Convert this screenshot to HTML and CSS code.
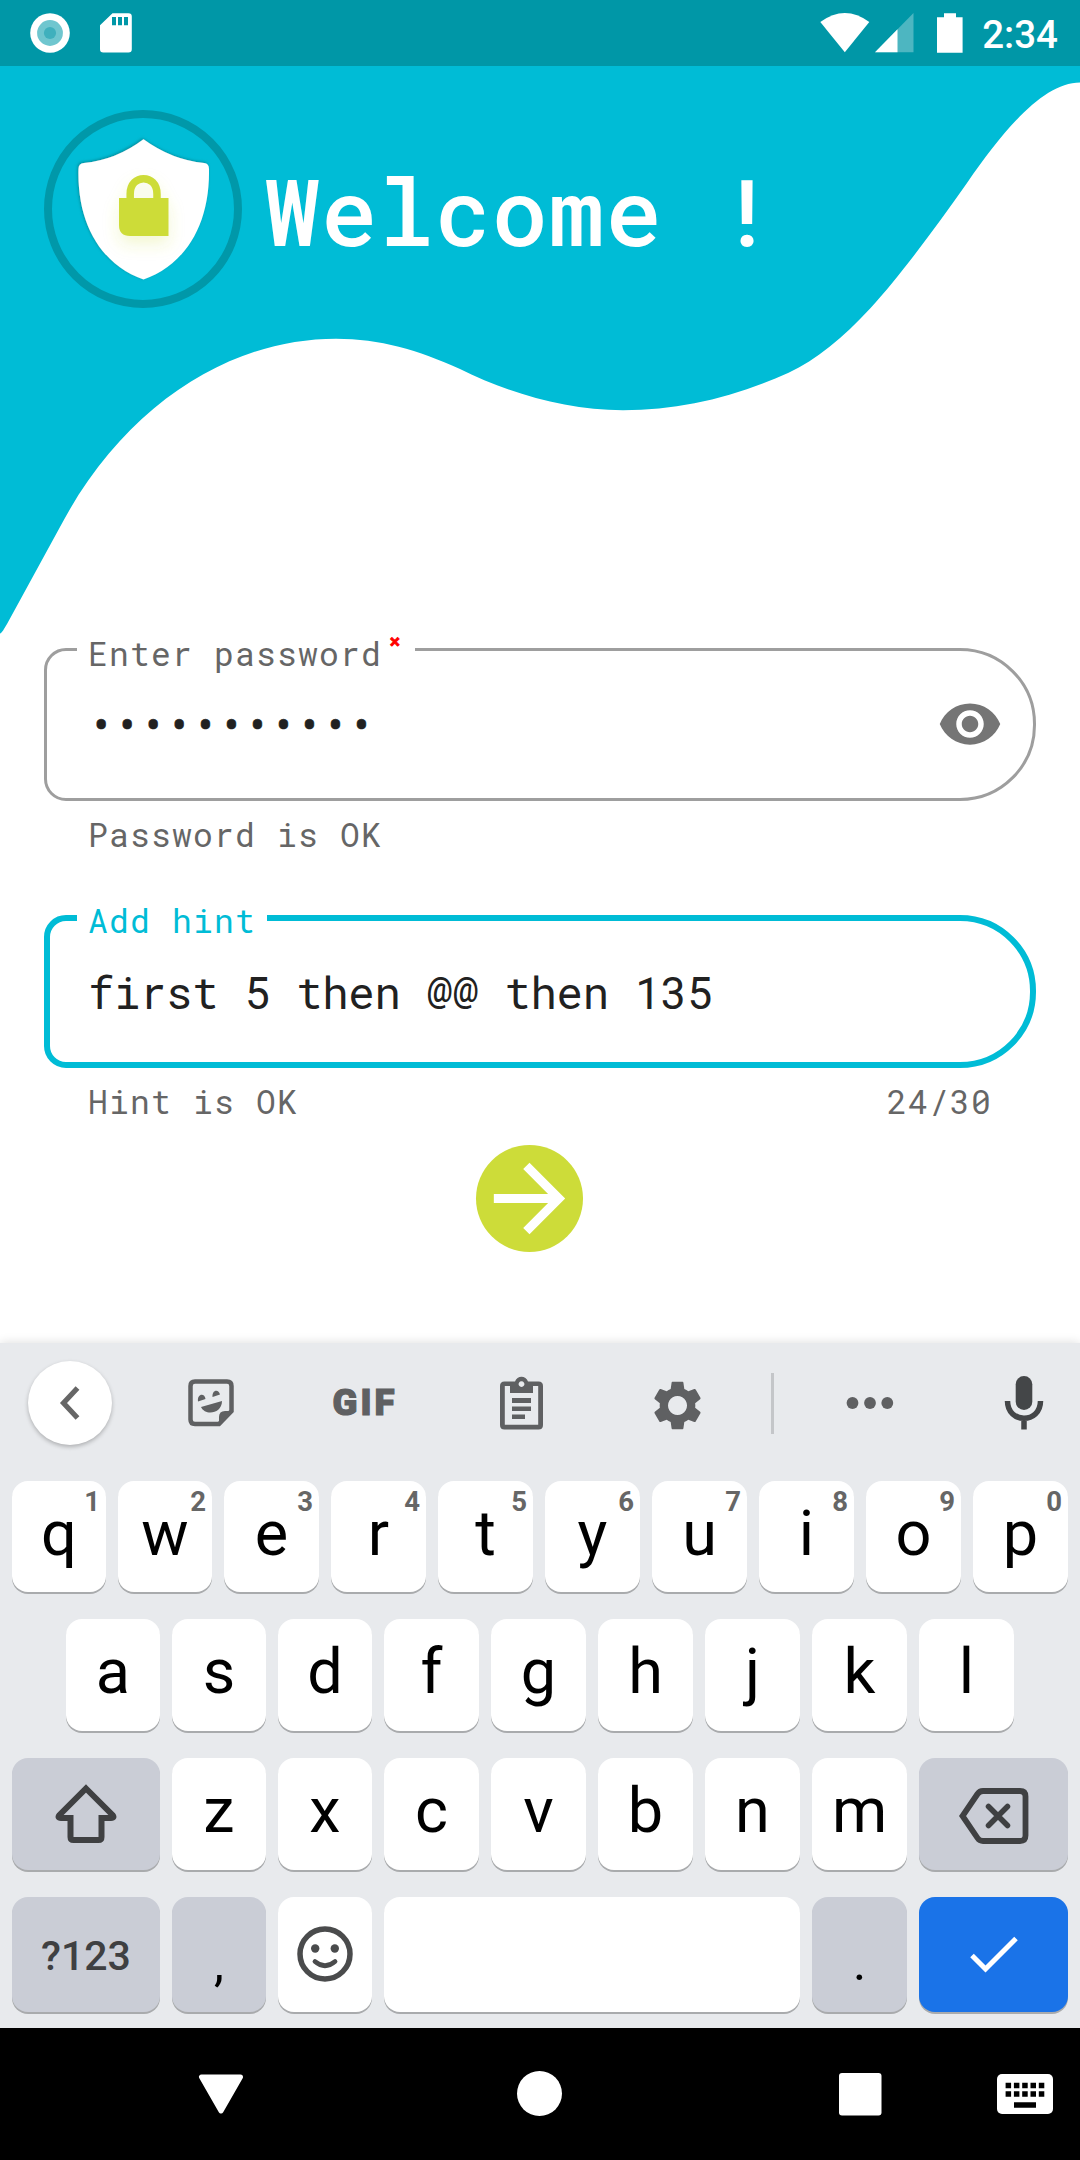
FILE: index.html
```html
<!DOCTYPE html>
<html lang="en">
<head>
<meta charset="utf-8">
<title>Welcome</title>
<link rel="stylesheet" href="styles.css">
</head>
<body>
<div class="screen">
  <div class="status-bar">
    <div class="status-left">
      <svg width="40" height="40" viewBox="0 0 40 40"><circle cx="20" cy="20" r="19.8" fill="#fff"/><circle cx="20" cy="20" r="12.9" fill="#6fc6cf"/><circle cx="20" cy="20" r="6.1" fill="#3fb0bd"/></svg>
      <svg width="32" height="40" viewBox="0 0 32 40"><path d="M12.500.3H28.500a3.300 3.300 0 0 1 3.300 3.300V36.200a3.300 3.300 0 0 1-3.300 3.300H3.300A3.300 3.300 0 0 1 0 36.200V12.200z" fill="#fff"/><path d="M12 4h4v8.300h-4zM18 4h4v8.300h-4zM24 4h4v8.300h-4z" fill="#0097a7"/></svg>
    </div>
    <div class="status-right">
      <svg class="wifi" width="50" height="40" viewBox="0 0 50 40"><path d="M.3 9Q25-9 49.300 9L24.800 39.300z" fill="#fff"/></svg>
      <svg class="signal" width="39" height="40" viewBox="0 0 39 40"><path d="M0 39.300 38.500 0v39.300z" fill="#fff" opacity=".3"/><path d="M0 39.300 22.500 16.300v23z" fill="#fff"/></svg>
      <svg class="battery" width="26" height="40" viewBox="0 0 26 40"><path d="M7 .3h12V4.300h6.600v35.400H0V4.300h7z" fill="#fff"/></svg>
      <span class="clock">2:34</span>
    </div>
  </div>

  <header class="hero">
    <svg class="wave" width="1080" height="570" viewBox="0 66 1080 570"><path fill="#00bcd6" d="M0 66H1080V82.500C1044 82.500 1005 128 967 183C936 227 900 276 870.600 308C843 338 816 360 788.600 372.700C735 397 680 410.300 623 410.300C566 410.300 508 393 460 369C418 350 380 338.700 336 338.700C231 338.700 125 404 60 527L7 624C4 629 2 633 0 633.500z"/></svg>
    <div class="brand">
      <div class="logo">
        <svg width="198" height="198" viewBox="44 110 198 198">
          <defs>
            <filter id="edge" x="-10%" y="-10%" width="120%" height="120%"><feDropShadow dx="-1" dy="-1" stdDeviation="1.500" flood-color="#00838f" flood-opacity=".8"/></filter>
            <filter id="glow" x="-50%" y="-50%" width="200%" height="200%"><feDropShadow dx="0" dy="8" stdDeviation="8" flood-color="#cddc39" flood-opacity=".22"/></filter>
          </defs>
          <circle cx="143" cy="209" r="95" fill="none" stroke="#0098a9" stroke-width="8"/>
          <path filter="url(#edge)" fill="#fff" d="M143.500 139.300Q172 160 204 163Q209 163.500 209 169C210 225 185 265 143.500 279.500C102 265 77 225 78.500 169Q78.500 163.500 84 163Q116 160 143.500 139.300z"/>
          <g filter="url(#glow)"><path fill="#cddc39" d="M119 198H168.500V236H130Q119 236 119 225z"/><path fill="none" stroke="#cddc39" stroke-width="7.500" d="M130.200 200V194C130.200 173.500 157 173.500 157 194V200"/></g>
        </svg>
      </div>
      <h1 class="title">Welcome !</h1>
    </div>
  </header>

  <main class="form">
    <div class="field">
      <div class="outline">
        <label class="label label-wide">Enter password<span class="required">×</span></label>
        <div class="value dots">•••••••••••</div>
        <svg class="eye" width="66" height="66" viewBox="0 0 24 24"><path fill="#757575" d="M12 4.500C7 4.500 2.730 7.610 1 12c1.730 4.390 6 7.500 11 7.500s9.270-3.110 11-7.500c-1.730-4.390-6-7.500-11-7.500zM12 17c-2.760 0-5-2.240-5-5s2.240-5 5-5 5 2.240 5 5-2.240 5-5 5zm0-8c-1.660 0-3 1.340-3 3s1.340 3 3 3 3-1.340 3-3-1.340-3-3-3z"/></svg>
      </div>
      <div class="helper"><span>Password is OK</span></div>
    </div>
    <div class="field focused">
      <div class="outline">
        <label class="label">Add hint</label>
        <div class="value">first 5 then @@ then 135</div>
      </div>
      <div class="helper"><span>Hint is OK</span><span class="counter">24/30</span></div>
    </div>
    <div class="next">
      <svg width="107" height="107" viewBox="0 0 24 24"><path fill="#fff" d="M12 4l-1.410 1.410L16.170 11H4v2h12.170l-5.580 5.590L12 20l8-8z"/></svg>
    </div>
  </main>

  <section class="keyboard">
    <div class="toolbar">
      <div class="tool"><div class="back"><svg width="22" height="34" viewBox="0 0 22 34"><path d="M18.500 2 4.500 17l14 15" fill="none" stroke="#666" stroke-width="5.200"/></svg></div></div>
      <div class="tool"><svg width="46" height="48" viewBox="0 0 46 48"><path d="M7 2.500H39Q43.500 2.500 43.500 7V32L31 45H7Q2.500 45 2.500 40.500V7Q2.500 2.500 7 2.500z" fill="none" stroke="#5f6062" stroke-width="4.500"/><path d="M31 46V38Q31 32 37 32H45z" fill="#5f6062"/><path d="M13 28 34 22C34 35 17 37 13 28zM10 22.500C9 14 17 14 17.500 20zM24.500 18C24 10 31 10 32 15.500z" fill="#5f6062"/></svg></div>
      <div class="tool gif">GIF</div>
      <div class="tool"><svg width="43" height="54" viewBox="0 0 43 54"><path fill="#5f6062" fill-rule="evenodd" d="M15 5.500C17-1 26-1 28 5.500H38.500Q43 5.500 43 10V49Q43 53.500 38.500 53.500H4.500Q0 53.500 0 49V10Q0 5.500 4.500 5.500zM10 10H4.800V48.800H38.200V10H33V17H10zM21.500 5.200a2.900 2.900 0 1 0 .01 0zM12 22H31V27H12zM12 30.500H31V35H12zM12 38.500H25V43H12z"/></svg></div>
      <div class="tool gear"><svg width="57" height="57" viewBox="0 0 24 24"><path fill="#5f6062" fill-rule="evenodd" d="M19.430 12.980c.04-.32.07-.64.07-.98s-.03-.66-.07-.98l2.110-1.650c.19-.15.24-.42.12-.64l-2-3.460c-.12-.22-.39-.3-.61-.22l-2.490 1c-.52-.4-1.080-.73-1.690-.98l-.38-2.650C14.460 2.180 14.250 2 14 2h-4c-.25 0-.46.18-.49.42l-.38 2.650c-.61.25-1.170.59-1.690.98l-2.490-1c-.23-.09-.49 0-.61.22l-2 3.460c-.13.22-.07.49.12.64l2.110 1.650c-.04.32-.07.65-.07.98s.03.66.07.98l-2.110 1.650c-.19.15-.24.42-.12.64l2 3.460c.12.22.39.3.61.22l2.490-1c.52.4 1.080.73 1.690.98l.38 2.650c.03.24.24.42.49.42h4c.25 0 .46-.18.49-.42l.38-2.650c.61-.25 1.170-.59 1.690-.98l2.490 1c.23.09.49 0 .61-.22l2-3.460c.12-.22.07-.49-.12-.64zM12 8a4 4 0 1 0 .01 0z"/></svg></div>
      <div class="tool"><span class="divider"></span></div>
      <div class="tool"><svg width="48" height="12" viewBox="0 0 48 12"><g fill="#5f6062"><circle cx="6.500" cy="6" r="5.900"/><circle cx="24" cy="6" r="5.900"/><circle cx="41.300" cy="6" r="5.900"/></g></svg></div>
      <div class="tool"><svg width="40" height="54" viewBox="0 0 40 54"><rect x="11.700" y="0" width="16.600" height="34" rx="8.300" fill="#444648"/><path d="M3.500 25C3.500 48 36.500 48 36.500 25M20 42V53.500" fill="none" stroke="#444648" stroke-width="5.500"/></svg></div>
    </div>

    <div class="row row-1">
      <div class="key">q<sup>1</sup></div><div class="key">w<sup>2</sup></div><div class="key">e<sup>3</sup></div><div class="key">r<sup>4</sup></div><div class="key">t<sup>5</sup></div><div class="key">y<sup>6</sup></div><div class="key">u<sup>7</sup></div><div class="key">i<sup>8</sup></div><div class="key">o<sup>9</sup></div><div class="key">p<sup>0</sup></div>
    </div>
    <div class="row row-2">
      <div class="key">a</div><div class="key">s</div><div class="key">d</div><div class="key">f</div><div class="key">g</div><div class="key">h</div><div class="key">j</div><div class="key">k</div><div class="key">l</div>
    </div>
    <div class="row row-3">
      <div class="key gray icon"><svg width="64" height="62" viewBox="0 0 64 62"><path d="M32 5.500 58.500 32Q61 35 57 35H47.500V54Q47.500 57 44.500 57H19.500Q16.500 57 16.500 54V35H7Q3 35 5.500 32z" fill="none" stroke="#3f4042" stroke-width="6"/></svg></div>
      <div class="key">z</div><div class="key">x</div><div class="key">c</div><div class="key">v</div><div class="key">b</div><div class="key">n</div><div class="key">m</div>
      <div class="key gray icon del"><svg width="70" height="56" viewBox="0 0 70 56"><path d="M24 3H61Q66.500 3 66.500 8.500V47.500Q66.500 53 61 53H24Q20.500 53 18.500 50L3.500 28 18.500 6Q20.500 3 24 3z" fill="none" stroke="#3f4042" stroke-width="5.800"/><path d="M29.500 18.500 48.500 37.500M48.500 18.500 29.500 37.500" stroke="#3f4042" stroke-width="5.500" stroke-linecap="round"/></svg></div>
    </div>
    <div class="row row-4">
      <div class="key gray sym">?123</div>
      <div class="key gray punct">,</div>
      <div class="key icon emoji"><svg width="56" height="56" viewBox="0 0 56 56"><g fill="none" stroke="#4a4b4c" stroke-width="5.500"><circle cx="28" cy="28" r="25"/><path d="M18 35.500Q28 44 38 35.500" stroke-width="4.800" stroke-linecap="round"/></g><circle cx="18.200" cy="22.500" r="4.200" fill="#4a4b4c"/><circle cx="37.800" cy="22.500" r="4.200" fill="#4a4b4c"/></svg></div>
      <div class="key"></div>
      <div class="key gray punct">.</div>
      <div class="key enter icon"><svg width="48" height="38" viewBox="0 0 48 38"><path d="M2 19.500 15.500 33 46 2.500" fill="none" stroke="#fff" stroke-width="5"/></svg></div>
    </div>
  </section>

  <nav class="nav">
    <svg width="46" height="40" viewBox="0 0 46 40"><path d="M3.500 3H42.500L23 37z" fill="#fff" stroke="#fff" stroke-width="5" stroke-linejoin="round"/></svg>
    <svg width="46" height="46" viewBox="0 0 46 46"><circle cx="22.500" cy="22.500" r="22.500" fill="#fff"/></svg>
    <svg width="43" height="43" viewBox="0 0 43 43"><rect width="42.500" height="42.500" rx="3" fill="#fff"/></svg>
    <svg width="56" height="40" viewBox="0 0 56 40"><rect width="56" height="40" rx="5" fill="#fff"/><path stroke="#000" stroke-width="5.500" stroke-dasharray="5.500 2.800" d="M8.600 11.500H48M8.600 20H48"/><path stroke="#000" stroke-width="5.500" d="M17 31H39"/></svg>
  </nav>
</div>
</body>
</html>
```

FILE: styles.css
```css
* { box-sizing: border-box; }
html, body { margin: 0; padding: 0; }
svg { display: block; flex: none; }

.screen {
  width: 1080px;
  height: 2160px;
  display: flex;
  flex-direction: column;
  background: #fff;
  overflow: hidden;
  font-family: Roboto, sans-serif;
}

/* Status bar */
.status-bar {
  height: 66px;
  flex: none;
  display: flex;
  justify-content: space-between;
  padding: 13px 22px 0 30px;
  background: #0097a7;
}
.status-left { display: flex; gap: 30px; }
.status-right { display: flex; color: #fff; }
.signal { margin-left: 5px; }
.battery { margin: 0 19px 0 23px; }
.clock {
  height: 40px;
  font-size: 38.5px;
  font-weight: 500;
  line-height: 44px;
}

/* Header with the wave */
.hero {
  position: relative;
  height: 582px;
  flex: none;
  padding: 44px 0 0 44px;
}
.wave { position: absolute; left: 0; top: 0; }
.brand { position: relative; display: flex; align-items: center; }
.title {
  margin: 0;
  padding: 1px 0 0 22px;
  color: #fff;
  font: 500 93.5px/108px "Roboto Mono", "DejaVu Sans Mono", monospace;
  letter-spacing: .8px;
  white-space: pre;
}

/* Form */
.form {
  height: 695px;
  flex: none;
  display: flex;
  flex-direction: column;
  padding: 0 44px;
  font-family: "Roboto Mono", "DejaVu Sans Mono", monospace;
}
.field { height: 267px; flex: none; }
.outline {
  position: relative;
  height: 153px;
  border: 3px solid #9e9e9e;
  border-radius: 22px 76px 76px 22px;
  padding-left: 41px;
}
.label {
  position: absolute;
  left: 30px;
  top: -18px;
  width: 190px;
  padding-left: 11px;
  background: #fff;
  color: #666;
  font-size: 33px;
  line-height: 40px;
  letter-spacing: 1.2px;
  white-space: nowrap;
}
.label-wide { width: 338px; }
.required {
  position: absolute;
  left: 312px;
  top: -12px;
  color: #f00;
  font-size: 19px;
  font-weight: 700;
  -webkit-text-stroke: .8px #f00;
}
.value {
  height: 141px;
  color: #212121;
  font-size: 44px;
  line-height: 142px;
  letter-spacing: -.37px;
  white-space: nowrap;
}
.dots { line-height: 147px; -webkit-text-stroke: .6px #212121; }
.eye { position: absolute; right: 30px; top: 40px; }
.helper {
  display: flex;
  justify-content: space-between;
  margin-top: 13px;
  padding: 0 44px;
  color: #666;
  font-size: 33px;
  line-height: 40px;
  letter-spacing: 1.2px;
}
.focused .outline { border: 6px solid #00bcd6; padding-left: 38px; }
.focused .label { left: 27px; top: -21px; color: #00bcd6; }
.next {
  width: 107px;
  height: 107px;
  margin: -37px 0 0 432px;
  border-radius: 50%;
  background: #cddc39;
}

/* Keyboard */
.keyboard {
  height: 685px;
  flex: none;
  background: #e8eaed;
  box-shadow: 0 0 10px rgba(0, 0, 0, .14);
}
.toolbar {
  height: 138px;
  padding-bottom: 18px;
  display: grid;
  grid-template-columns: 140px 142px 166px 147px 165px 25px 169px 140px;
}
.tool { display: flex; align-items: center; justify-content: center; }
.back {
  width: 84px;
  height: 84px;
  display: flex;
  align-items: center;
  justify-content: center;
  border-radius: 50%;
  background: #fff;
  box-shadow: 0 2px 4px rgba(0, 0, 0, .25);
}
.gif {
  padding-bottom: 1px;
  color: #5f6062;
  font-size: 36.5px;
  font-weight: 900;
  letter-spacing: 3px;
  -webkit-text-stroke: 1.2px #5f6062;
}
.gear { padding-top: 4px; }
.divider { width: 3px; height: 61px; background: #c4c6c9; }

.row { display: grid; grid-template-rows: 100%; column-gap: 12px; padding: 0 12px; margin-bottom: 27px; }
.row-1 { height: 111px; grid-template-columns: repeat(2, 94px) repeat(8, 95px); }
.row-2 { height: 112px; padding: 0 66px; grid-template-columns: repeat(3, 94px) repeat(6, 95px); }
.row-3 { height: 112px; grid-template-columns: 148px repeat(2, 94px) repeat(5, 95px) 149px; }
.row-4 { height: 115px; margin-bottom: 0; grid-template-columns: 148px 94px 94px 416px 95px 149px; }
.key {
  position: relative;
  border-radius: 16px;
  background: #fff;
  box-shadow: 0 2px 0 #a9abad;
  color: #000;
  font-size: 63px;
  line-height: 105px;
  text-align: center;
}
.key sup {
  position: absolute;
  right: 6px;
  top: 0;
  color: #666;
  font-size: 27.5px;
  font-weight: 700;
  line-height: 41px;
}
.gray { background: #cacdd6; }
.icon { display: flex; align-items: center; justify-content: center; }
.del { padding-top: 4px; }
.emoji { padding-bottom: 2px; }
.sym { color: #3f4042; font-size: 41px; font-weight: 500; line-height: 119px; }
.punct { font-size: 50px; line-height: 133px; }
.enter { background: #1a73e8; }

/* System navigation */
.nav {
  height: 132px;
  flex: none;
  display: flex;
  align-items: center;
  padding-left: 198px;
  background: #000;
}
.nav svg:nth-child(2) { margin-left: 273px; }
.nav svg:nth-child(3) { margin-left: 276px; }
.nav svg:nth-child(4) { margin-left: 115px; }
```
